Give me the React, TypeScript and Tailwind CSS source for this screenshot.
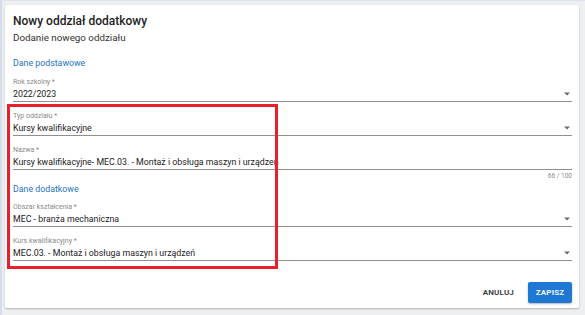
function Arrow() {
  return (
    <svg width="6" height="4" viewBox="0 0 6 4" className="shrink-0 mr-[2px]">
      <path d="M0 0.5 L6 0.5 L3 3.5 Z" fill="#6b6b6b" />
    </svg>
  )
}

function Field({ label, value, select }: { label: string; value: string; select?: boolean }) {
  return (
    <div className="flex flex-col border-b border-[#8f8f8f]">
      <div className="h-[10px] text-[7px] leading-[10px] text-[#8a8a8a]">{label}</div>
      <div className="h-[14px] flex items-center justify-between">
        <span className="text-[8.8px] leading-[14px] text-[#222]">{value}</span>
        {select && <Arrow />}
      </div>
    </div>
  )
}

export default function App() {
  return (
    <div className="w-[585px] h-[315px] bg-[#eeeff1] border-l-2 border-l-[#d5dcea] border-t border-t-[#dfe3ec] pt-[4px] pl-[3px] font-['Roboto',sans-serif]">
      <div className="relative w-[574px] h-[303px] bg-white rounded-[2px] shadow-[0_1px_2px_rgba(0,0,0,0.25)] pt-[8px] pl-[8px] pr-[7px] flex flex-col">
        <div className="text-[12px] leading-[16px] font-medium text-[#222]">Nowy oddział dodatkowy</div>
        <div className="mt-[2px] text-[9.8px] leading-[14px] text-[#333]">Dodanie nowego oddziału</div>
        <div className="mt-[11px] text-[8.8px] leading-[14px] text-[#1e74c6]">Dane podstawowe</div>

        <div className="mt-[7px] flex flex-col gap-[9px]">
          <Field label="Rok szkolny *" value="2022/2023" select />
          <Field label="Typ oddziału *" value="Kursy kwalifikacyjne" select />
          <Field label="Nazwa *" value="Kursy kwalifikacyjne- MEC.03. - Montaż i obsługa maszyn i urządzeń" />
        </div>
        <div className="h-[12px] text-right text-[6.5px] leading-[12px] text-[#8a8a8a]">66 / 100</div>

        <div className="text-[8.8px] leading-[14px] text-[#1e74c6]">Dane dodatkowe</div>
        <div className="mt-[6px] flex flex-col gap-[9px]">
          <Field label="Obszar kształcenia *" value="MEC - branża mechaniczna" select />
          <Field label="Kurs kwalifikacyjny *" value="MEC.03. - Montaż i obsługa maszyn i urządzeń" select />
        </div>

        <div className="mt-[21px] flex justify-end items-center gap-[12px]">
          <button className="h-[20px] px-[2px] text-[8px] font-semibold tracking-[0.2px] text-[#333]">ANULUJ</button>
          <button className="h-[21px] w-[44px] rounded-[2px] bg-[#1e78d4] text-[8px] font-semibold tracking-[0.2px] text-white shadow-[0_1px_2px_rgba(0,0,0,0.3)]">
            ZAPISZ
          </button>
        </div>

        <div className="absolute left-[2px] top-[99px] w-[271px] h-[165px] border-[3px] border-[#e8202b]" />
      </div>
    </div>
  )
}
